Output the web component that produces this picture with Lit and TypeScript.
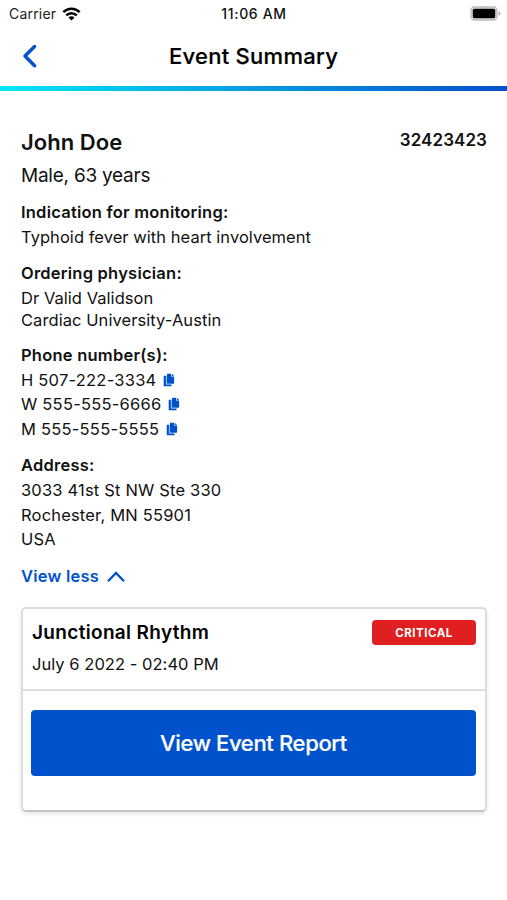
import { LitElement, html, css } from "lit";
import { customElement } from "lit/decorators.js";

const copyIcon = html`<svg class="copy" width="12" height="14" viewBox="0 0 12 14" fill="#0052cc">
  <path d="M4.6.7h3.5v2.8h3v6.6q0 .6-.6.6H4.6q-.6 0-.6-.6V1.3q0-.6.6-.6z" /><path d="M8.8.7l2.3 2.2H8.8z" />
  <path d="M1.3 2.7h1.9v8.8h5.3v1.2q0 .6-.6.6H1.3q-.6 0-.6-.6V3.3q0-.6.6-.6z" />
  <path d="M3.2 3v8.5h5.3" fill="none" stroke="#6c9ce2" stroke-width=".8" />
</svg>`;

const phones = ["H 507-222-3334", "W 555-555-6666", "M 555-555-5555"];
const address = ["3033 41st St NW Ste 330", "Rochester, MN 55901", "USA"];

@customElement("app-root")
export class AppRoot extends LitElement {
  static styles = css`
    :host { display: block; height: 900px; background: #fff; color: #111; font-family: Inter, "Liberation Sans", sans-serif; overflow: hidden; }
    * { box-sizing: border-box; }
    svg { display: block; flex: none; }
    .status { height: 28px; display: grid; grid-template-columns: 1fr auto 1fr; align-items: center; padding: 0 8px 0 9px; font-size: 14px; }
    .carrier { display: flex; align-items: center; gap: 6px; letter-spacing: 0.2px; line-height: 26px; padding-bottom: 1px; color: #222; }
    .time { font-weight: 500; letter-spacing: 0.65px; padding-bottom: 1px; }
    .battery { justify-self: end; margin-bottom: 2px; margin-right: -2px; }
    .nav { height: 58px; display: grid; grid-template-columns: 60px 1fr 60px; align-items: center; text-align: center; }
    .back { margin-left: 20px; margin-bottom: 3px; }
    h1 { font-size: 22px; font-weight: 500; letter-spacing: 0.28px; margin: 0 0 2px; color: #000; -webkit-text-stroke: 0.2px; }
    .bar { height: 5px; background: linear-gradient(90deg, #06e6f7, #0050cc); }
    main { padding: 37px 20px 0 21px; }
    .top { display: flex; justify-content: space-between; }
    .name { font-size: 22px; font-weight: 600; line-height: 28px; letter-spacing: 0.05px; }
    .id { font-size: 17px; font-weight: 600; line-height: 24px; letter-spacing: 0.08px; }
    .demo { font-size: 19px; line-height: 28px; margin-top: 6px; letter-spacing: -0.24px; }
    .label { font-size: 16.5px; font-weight: 600; line-height: 24.5px; letter-spacing: 0.23px; }
    .line { font-size: 16.5px; line-height: 24.5px; display: flex; align-items: center; gap: 7px; letter-spacing: 0.04px; }
    .section { margin-top: 12px; }
    .indication { margin-top: 10px; }
    .tight .line + .line { line-height: 22px; letter-spacing: 0.07px; margin-top: -1px; }
    .digits .line { letter-spacing: 0.23px; }
    .address .line { letter-spacing: 0.18px; }
    .phones .label, .address .label { margin-bottom: 0.5px; }
    .phones { margin-top: 11.5px; }
    .more { display: flex; align-items: center; gap: 8px; color: #0052cc; font-weight: 600; font-size: 16.5px; line-height: 24px; margin-top: 12px; letter-spacing: 0.23px; }
    .card { margin-top: 19.5px; height: 205px; border: 2px solid #ddd; border-bottom-color: #c4c4c4; border-radius: 5px; box-shadow: 0 2px 4px rgba(0, 0, 0, 0.1); }
    .head { height: 82px; border-bottom: 2px solid #ddd; padding: 11px 9px 0; }
    .row { display: flex; justify-content: space-between; align-items: center; }
    .rhythm { font-size: 19px; font-weight: 600; letter-spacing: 0.33px; color: #000; }
    .date { margin-top: 7px; }
    .badge { width: 104px; height: 25px; background: #e02020; color: #fff; border-radius: 4px; font-size: 11.5px; font-weight: 700; letter-spacing: 0.5px; display: grid; place-items: center; }
    .button { margin: 19px 9px 0 8px; height: 66px; background: #0052cc; color: #fff; border-radius: 4px; font-size: 22px; font-weight: 500; letter-spacing: -0.35px; display: grid; place-items: center; -webkit-text-stroke: 0.2px; }
  `;

  render() {
    return html`
      <div class="status">
        <div class="carrier">Carrier
          <svg width="19" height="14" viewBox="0 0 19 14" fill="none" stroke="#000" stroke-width="2.5">
            <path d="M1.3 5.2C5.9.6 13.1.6 17.7 5.2" /><path d="M4.2 8.4c3-3 7.6-3 10.6 0" />
            <path d="M9.5 13.6l-3-3.2c1.7-1.5 4.3-1.5 6 0z" fill="#000" stroke="none" />
          </svg>
        </div>
        <div class="time">11:06 AM</div>
        <svg class="battery" width="31" height="15" viewBox="0 0 31 15">
          <rect x="1" y="1" width="26" height="13" rx="3.5" fill="#ddd" stroke="#bbb" stroke-width="1.3" />
          <rect x="2.8" y="2.8" width="22.4" height="9.4" rx="1.5" fill="#000" />
          <path d="M28.6 5.2c2.3.8 2.3 3.8 0 4.6z" fill="#aaa" />
        </svg>
      </div>
      <div class="nav">
        <svg class="back" width="19" height="26" viewBox="0 0 19 26" fill="none" stroke="#0052cc" stroke-width="3.5" stroke-linecap="round" stroke-linejoin="round"><path d="M14.6 3.5L5 13l9.6 9.7" /></svg>
        <h1>Event Summary</h1>
      </div>
      <div class="bar"></div>
      <main>
        <div class="top"><div class="name">John Doe</div><div class="id">32423423</div></div>
        <div class="demo">Male, 63 years</div>
        <div class="section indication"><div class="label">Indication for monitoring:</div><div class="line">Typhoid fever with heart involvement</div></div>
        <div class="section tight"><div class="label">Ordering physician:</div><div class="line">Dr Valid Validson</div><div class="line">Cardiac University-Austin</div></div>
        <div class="section digits phones"><div class="label">Phone number(s):</div>${phones.map((p) => html`<div class="line">${p}${copyIcon}</div>`)}</div>
        <div class="section digits address"><div class="label">Address:</div>${address.map((a) => html`<div class="line">${a}</div>`)}</div>
        <div class="more">View less
          <svg width="18" height="12" viewBox="0 0 18 12" fill="none" stroke="#0052cc" stroke-width="2.3"><path d="M1 11.2L9 3l8 8.2" /></svg>
        </div>
        <div class="card">
          <div class="head">
            <div class="row"><div class="rhythm">Junctional Rhythm</div><div class="badge">CRITICAL</div></div>
            <div class="line date">July 6 2022 - 02:40 PM</div>
          </div>
          <div class="button">View Event Report</div>
        </div>
      </main>`;
  }
}
